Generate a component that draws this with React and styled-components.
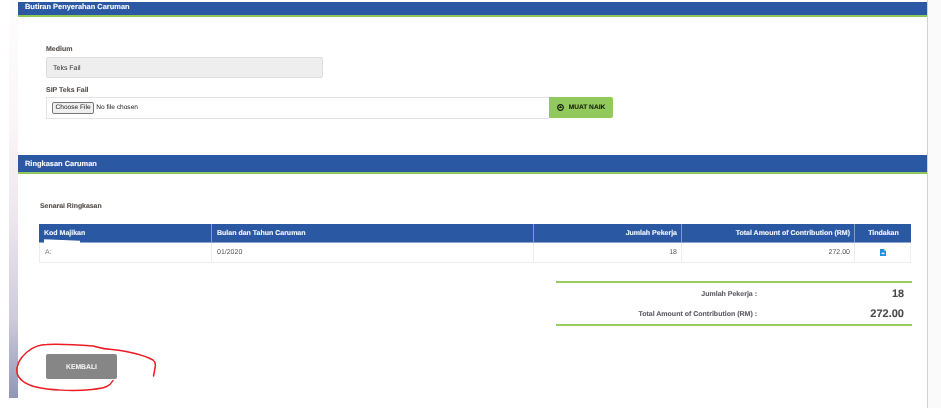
import React from "react";
import styled, { createGlobalStyle } from "styled-components";

const Global = createGlobalStyle`
  html, body { margin: 0; padding: 0; background: #fff; }
  body {
    font-family: "Liberation Sans", Arial, sans-serif;
    color: #555;
    text-rendering: geometricPrecision;
  }
`;

const Page = styled.div`
  position: relative;
  width: 941px;
  height: 408px;
  overflow: hidden;
  background: #fff;
  display: flex;
  padding-left: 9px;
  box-sizing: border-box;
`;

const Gutter = styled.div`
  width: 9px;
  height: 398px;
  flex: none;
  background: linear-gradient(180deg, #fefdfd 0%, #fbf6f8 30%, #eee6ee 55%, #cfcbda 80%, #8f97b6 100%);
`;

const Main = styled.main`
  width: 909px;
  flex: none;
  padding-top: 2px;
  box-sizing: border-box;
  filter: blur(0.25px);
`;

const Rail = styled.div`
  flex: none;
  width: 14px;
  height: 408px;
  background: #fafafa;
  border-left: 1px solid #d2d2d2;
  box-sizing: border-box;
`;

const SectionBar = styled.h2`
  margin: 0;
  height: ${(p) => p.$h}px;
  line-height: ${(p) => p.$lh}px;
  padding-left: 7px;
  background: #2a58a3;
  border-bottom: 2px solid #8fc85a;
  color: #f7f9fc;
  font-size: 7.45px;
  font-weight: 700;
  overflow: hidden;
  -webkit-text-stroke: 0.1px #f7f9fc;
`;

const UploadSection = styled.section`
  height: 138px;
  padding: 28px 0 0 28px;
  box-sizing: border-box;
`;

const Label = styled.div`
  font-size: 7px;
  font-weight: 700;
  color: #55504c;
  line-height: 10px;
  height: 10px;
  margin-bottom: ${(p) => p.$mb}px;
  -webkit-text-stroke: 0.1px #55504c;
`;

const ReadOnly = styled.div`
  width: 277px;
  height: 21px;
  line-height: 21px;
  padding-left: 6px;
  background: #eeeeee;
  border: 1px solid #dedede;
  border-radius: 2px;
  box-sizing: border-box;
  color: #333;
  font-size: 7px;
  margin-bottom: 8px;
`;

const FileRow = styled.div`
  display: flex;
  width: 567px;
  height: 22px;
`;

const FileBox = styled.div`
  width: 503px;
  height: 22px;
  display: flex;
  align-items: center;
  gap: 2px;
  padding: 0 0 1px 5px;
  border: 1px solid #e4e4e4;
  border-right: 0;
  box-sizing: border-box;
  color: #222;
  font-size: 6.6px;
`;

const ChooseFile = styled.span`
  display: inline-block;
  height: 10px;
  line-height: 9px;
  padding: 0 2.5px;
  background: #efefef;
  border: 1px solid #777;
  border-radius: 2px;
  font-size: 6.6px;
  color: #222;
`;

const UploadButton = styled.div`
  width: 64px;
  height: 21px;
  display: flex;
  align-items: center;
  justify-content: center;
  gap: 5px;
  background: #92c95c;
  border-radius: 0 2px 2px 0;
  color: #16210d;
  font-size: 6.6px;
  font-weight: 700;
  -webkit-text-stroke: 0.1px #16210d;
`;

const SummarySection = styled.section`
  padding: 28px 15px 0 21px;
`;

const SubTitle = styled.div`
  font-size: 6.9px;
  font-weight: 700;
  color: #55504c;
  line-height: 10px;
  margin-bottom: 12px;
  padding-left: 1px;
  -webkit-text-stroke: 0.1px #55504c;
`;

const Table = styled.div`
  width: 872px;
  border-bottom: 1px solid #eee;
`;

const TableRow = styled.div`
  display: grid;
  grid-template-columns: 172px 322px 148px 173px 57px;
  height: ${(p) => p.$h}px;
  background: ${(p) => (p.$head ? "#2a58a3" : "#fff")};
  color: ${(p) => (p.$head ? "#f5f7fb" : "#555")};
  font-size: 7px;
  font-weight: ${(p) => (p.$head ? 700 : 400)};
  ${(p) => p.$head && "border-bottom: 1px solid #8ea6cc; -webkit-text-stroke: 0.1px #f5f7fb;"}
`;

const Cell = styled.div`
  display: flex;
  align-items: center;
  padding: 0 4px 0 5px;
  justify-content: ${(p) => p.$align || "flex-start"};
  border-left: 1px solid ${(p) => (p.$head ? "#7f9bc6" : "#eee")};
  &:first-child { border-left: ${(p) => (p.$head ? "0" : "1px solid #eee")}; }
  &:last-child { border-right: ${(p) => (p.$head ? "0" : "1px solid #eee")}; }
  white-space: nowrap;
`;

const Totals = styled.div`
  margin: 18px 0 0 517px;
  width: 356px;
  height: 45px;
  box-sizing: border-box;
  border-top: 2px solid #97cc63;
  border-bottom: 2px solid #97cc63;
  display: flex;
  flex-direction: column;
  justify-content: space-between;
  padding: 2px 0 1px;
`;

const TotalRow = styled.div`
  display: grid;
  grid-template-columns: 201px 147px;
  align-items: center;
  height: 18px;
`;

const TotalLabel = styled.div`
  text-align: right;
  font-size: 7px;
  font-weight: 700;
  color: #5c5c64;
  -webkit-text-stroke: 0.1px #5c5c64;
`;

const TotalValue = styled.div`
  text-align: right;
  font-size: ${(p) => p.$size}px;
  font-weight: 700;
  color: #4a4a4a;
  -webkit-text-stroke: 0.1px #4a4a4a;
`;

const BackButton = styled.div`
  margin: 28px 0 0 28px;
  width: 71px;
  height: 25px;
  line-height: 27px;
  text-align: center;
  background: #868686;
  border-radius: 2px;
  color: #f8f8f8;
  font-size: 6.8px;
  font-weight: 700;
`;

const Redaction = styled.div`
  position: absolute;
  left: 44px;
  top: 240px;
  width: 36px;
  height: 4px;
  background: #fff;
  transform: rotate(2deg);
`;

const Code = styled.span`
  display: inline-block;
  color: #777;
`;

const Scribble = styled.svg`
  position: absolute;
  left: 0;
  top: 320px;
  pointer-events: none;
`;

const DocIcon = () => (
  <svg width="6" height="7" viewBox="0 0 6 7" aria-hidden="true">
    <path d="M0 0H4L6 2V7H0Z" fill="#1d8fdc" />
    <path d="M4 0L6 2H4Z" fill="#a8d6f3" />
    <rect x="1.5" y="3.6" width="3" height="1.6" fill="#d5ecfa" />
  </svg>
);

const UploadIcon = () => (
  <svg width="7" height="7" viewBox="0 0 7 7" aria-hidden="true">
    <circle cx="3.5" cy="3.5" r="2.8" fill="none" stroke="#16210d" strokeWidth="1.2" />
    <path d="M3.5 1.8L5.2 3.9H1.8Z" fill="#16210d" />
  </svg>
);

export default function App() {
  return (
    <Page>
      <Global />
      <Gutter />
      <Main>
        <SectionBar $h={13} $lh={9}>Butiran Penyerahan Caruman</SectionBar>
        <UploadSection>
          <Label $mb={2}>Medium</Label>
          <ReadOnly>Teks Fail</ReadOnly>
          <Label $mb={1}>SIP Teks Fail</Label>
          <FileRow>
            <FileBox>
              <ChooseFile>Choose File</ChooseFile>
              <span>No file chosen</span>
            </FileBox>
            <UploadButton>
              <UploadIcon />
              MUAT NAIK
            </UploadButton>
          </FileRow>
        </UploadSection>
        <SectionBar $h={17} $lh={18}>Ringkasan Caruman</SectionBar>
        <SummarySection>
          <SubTitle>Senarai Ringkasan</SubTitle>
          <Table>
            <TableRow $head $h={18}>
              <Cell $head>Kod Majikan</Cell>
              <Cell $head>Bulan dan Tahun Caruman</Cell>
              <Cell $head $align="flex-end">Jumlah Pekerja</Cell>
              <Cell $head $align="flex-end">Total Amount of Contribution (RM)</Cell>
              <Cell $head $align="center">Tindakan</Cell>
            </TableRow>
            <TableRow $h={19}>
              <Cell><Code>A:</Code></Cell>
              <Cell>01/2020</Cell>
              <Cell $align="flex-end">18</Cell>
              <Cell $align="flex-end">272.00</Cell>
              <Cell $align="center"><DocIcon /></Cell>
            </TableRow>
          </Table>
          <Totals>
            <TotalRow>
              <TotalLabel>Jumlah Pekerja :</TotalLabel>
              <TotalValue $size={10.8}>18</TotalValue>
            </TotalRow>
            <TotalRow>
              <TotalLabel>Total Amount of Contribution (RM) :</TotalLabel>
              <TotalValue $size={11}>272.00</TotalValue>
            </TotalRow>
          </Totals>
        </SummarySection>
        <BackButton>KEMBALI</BackButton>
      </Main>
      <Rail />
      <Redaction />
      <Scribble width="200" height="88" viewBox="0 0 200 88" fill="none">
        <path
          d="M113 60.5C110 66 106 68 92 69.5C72 71.5 48 70 36 67C26 64.5 19 60 17 53C16 46 20 38 27 32C33 27 38 24.5 47 24.5C62 24 80 25 93 26C98 27 100 29 112 29.5C125 31 142 34 153 40C157 43 155 48 153.5 56"
          stroke="#ec1c24"
          strokeWidth="1.5"
          strokeLinecap="round"
        />
      </Scribble>
    </Page>
  );
}
